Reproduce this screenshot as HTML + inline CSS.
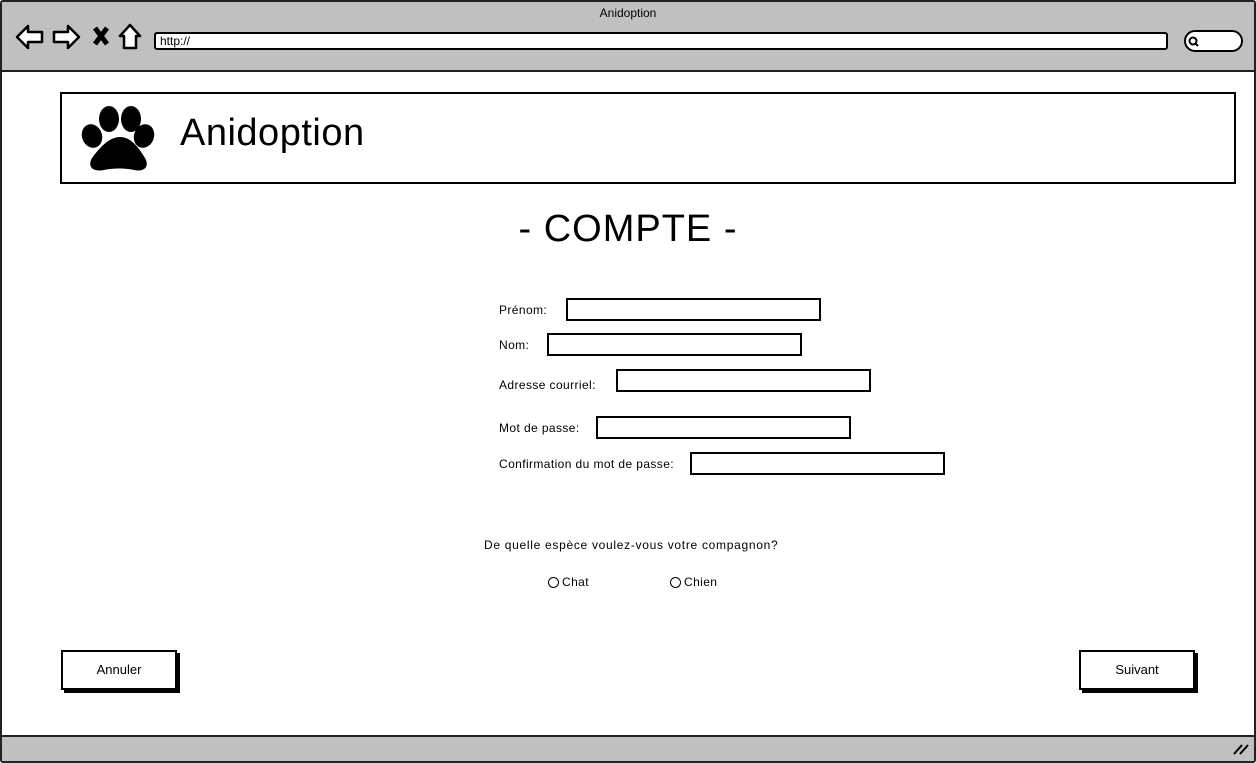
<!DOCTYPE html>
<html><head><meta charset="utf-8"><style>
*{margin:0;padding:0;box-sizing:border-box}
body{width:1256px;height:763px;position:relative;background:#fff;font-family:"Liberation Sans",sans-serif;color:#000;overflow:hidden}
.a{position:absolute}
.box{position:absolute;border:2px solid #000;background:#fff}
.lbl{position:absolute;font-size:12px;letter-spacing:0.4px}
.btn{position:absolute;border:2px solid #000;background:#fff;box-shadow:3px 3px 0 #000;font-size:13px;text-align:center;line-height:36px}
</style></head><body>
<div class="a" style="left:0;top:0;width:1256px;height:763px;border:2px solid #222;border-radius:3px"></div>
<div class="a" style="left:2px;top:2px;width:1252px;height:70px;background:#c0c0c0;border-bottom:2px solid #222"></div>
<div class="a" style="left:0;top:6px;width:1256px;text-align:center;font-size:12px">Anidoption</div>
<svg class="a" style="left:14px;top:22px" width="132" height="30" viewBox="0 0 132 30" fill="#fff" stroke="#000" stroke-width="2.5" stroke-linejoin="round">
<path d="M3 15 L14 4 L14 10 L28 10 L28 20 L14 20 L14 26 Z"/>
<path d="M65 15 L54 4 L54 10 L40 10 L40 20 L54 20 L54 26 Z"/>
<path d="M81 6 L93 22 M93 6 L81 22" stroke-width="5"/>
<path d="M116 3 L106 14 L110 14 L110 26 L122 26 L122 14 L126 14 Z"/>
</svg>
<div class="a" style="left:154px;top:32px;width:1014px;height:18px;background:#fff;border:2px solid #000;border-radius:3px;font-size:12px;padding-left:4px;line-height:14px">http://</div>
<div class="a" style="left:1184px;top:30px;width:59px;height:22px;background:#fff;border:2px solid #000;border-radius:12px"></div>
<svg class="a" style="left:1187px;top:35px" width="14" height="14"><circle cx="6" cy="6" r="3.5" fill="none" stroke="#000" stroke-width="2"/><path d="M8 8 L11 11" stroke="#000" stroke-width="2"/></svg>
<div class="a" style="left:2px;top:735px;width:1252px;height:26px;background:#c0c0c0;border-top:2px solid #222"></div>
<svg class="a" style="left:1232px;top:742px" width="18" height="14"><path d="M2 12 L10 3 M8 12 L16 3" stroke="#000" stroke-width="2"/></svg>
<div class="box" style="left:60px;top:92px;width:1176px;height:92px"></div>
<svg class="a" style="left:80px;top:104px" width="76" height="68" viewBox="0 0 76 68">
<ellipse cx="29" cy="15" rx="10" ry="13"/><ellipse cx="51" cy="15" rx="10" ry="13"/>
<ellipse cx="12" cy="32" rx="10" ry="12" transform="rotate(-20 12 32)"/><ellipse cx="64" cy="32" rx="10" ry="12" transform="rotate(20 64 32)"/>
<path d="M40 33 C28 33 18 46 12 54 C7 63 13 68 24 66 C32 64 46 64 54 66 C64 68 70 63 65 54 C60 46 52 33 40 33 Z"/>
</svg>
<div class="a" style="left:180px;top:112px;font-size:38px;letter-spacing:0.5px">Anidoption</div>
<div class="a" style="left:0;top:208px;width:1256px;text-align:center;font-size:38px;letter-spacing:1px">- COMPTE -</div>
<div class="lbl" style="left:499px;top:303px">Prénom:</div><div class="box" style="left:566px;top:298px;width:255px;height:23px"></div>
<div class="lbl" style="left:499px;top:338px">Nom:</div><div class="box" style="left:547px;top:333px;width:255px;height:23px"></div>
<div class="lbl" style="left:499px;top:378px">Adresse courriel:</div><div class="box" style="left:616px;top:369px;width:255px;height:23px"></div>
<div class="lbl" style="left:499px;top:421px">Mot de passe:</div><div class="box" style="left:596px;top:416px;width:255px;height:23px"></div>
<div class="lbl" style="left:499px;top:457px">Confirmation du mot de passe:</div><div class="box" style="left:690px;top:452px;width:255px;height:23px"></div>
<div class="lbl" style="left:484px;top:538px;letter-spacing:0.7px">De quelle espèce voulez-vous votre compagnon?</div>
<div class="a" style="left:548px;top:577px;width:11px;height:11px;border:1px solid #000;border-radius:50%"></div><div class="lbl" style="left:562px;top:575px">Chat</div>
<div class="a" style="left:670px;top:577px;width:11px;height:11px;border:1px solid #000;border-radius:50%"></div><div class="lbl" style="left:684px;top:575px">Chien</div>
<div class="btn" style="left:61px;top:650px;width:116px;height:40px">Annuler</div>
<div class="btn" style="left:1079px;top:650px;width:116px;height:40px">Suivant</div>
</body></html>
